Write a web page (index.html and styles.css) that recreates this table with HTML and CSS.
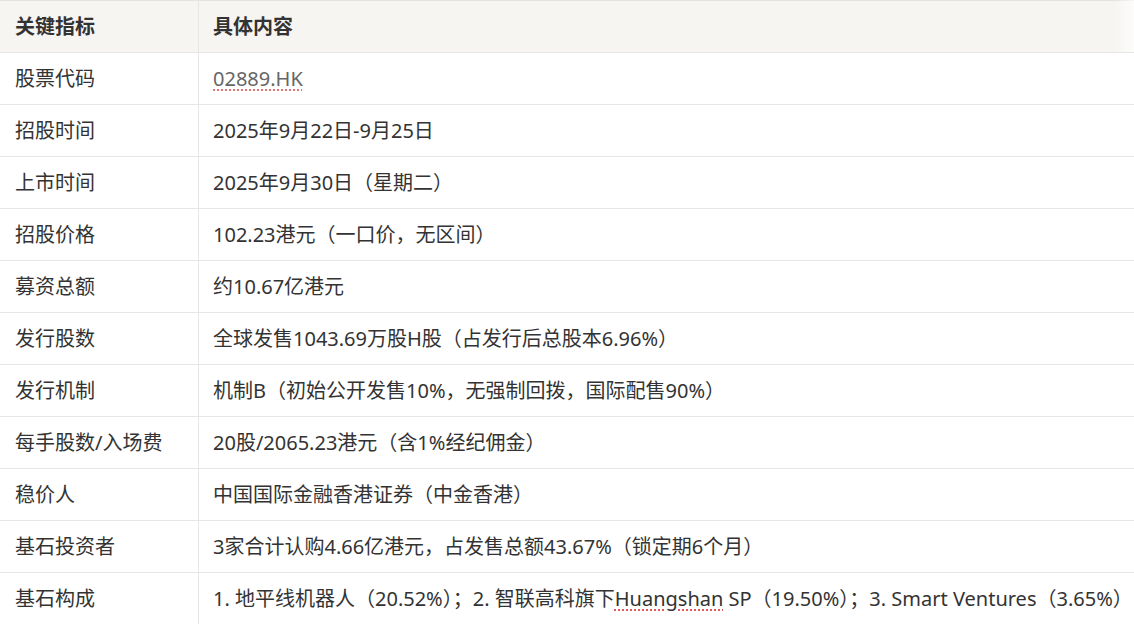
FILE: index.html
```html
<!DOCTYPE html>
<html lang="zh-CN">
<head>
<meta charset="utf-8">
<title>IPO</title>
<link rel="stylesheet" href="styles.css">
</head>
<body>
<div class="wrap">
<table class="ipo">
<thead>
<tr><th class="k">关键指标</th><th class="v">具体内容</th></tr>
</thead>
<tbody>
<tr><td class="k">股票代码</td><td class="v"><span class="code">02889.HK</span></td></tr>
<tr><td class="k">招股时间</td><td class="v">2025年9月22日-9月25日</td></tr>
<tr><td class="k">上市时间</td><td class="v">2025年9月30日（星期二）</td></tr>
<tr><td class="k">招股价格</td><td class="v">102.23港元（一口价，无区间）</td></tr>
<tr><td class="k">募资总额</td><td class="v">约10.67亿港元</td></tr>
<tr><td class="k">发行股数</td><td class="v">全球发售1043.69万股H股（占发行后总股本6.96%）</td></tr>
<tr><td class="k">发行机制</td><td class="v">机制B（初始公开发售10%，无强制回拨，国际配售90%）</td></tr>
<tr><td class="k">每手股数/入场费</td><td class="v">20股/2065.23港元（含1%经纪佣金）</td></tr>
<tr><td class="k">稳价人</td><td class="v">中国国际金融香港证券（中金香港）</td></tr>
<tr><td class="k">基石投资者</td><td class="v">3家合计认购4.66亿港元，占发售总额43.67%（锁定期6个月）</td></tr>
<tr><td class="k">基石构成</td><td class="v">1. 地平线机器人（20.52%）；2. 智联高科旗下<span class="spell">Huangshan</span> SP（19.50%）；3. Smart Ventures（3.65%）</td></tr>
</tbody>
</table>
<div class="fade"></div>
</div>
</body>
</html>
```
FILE: styles.css
```css
html, body {
  margin: 0;
  padding: 0;
  background: #ffffff;
  overflow: hidden;
}
.wrap {
  position: relative;
  width: 1134px;
  height: 624px;
  overflow: hidden;
}
.ipo {
  border-collapse: collapse;
  font-family: "Noto Sans", "Noto Sans CJK SC", sans-serif;
  font-size: 20px;
  color: #333333;
  width: max-content;
  min-width: 1134px;
}
.ipo th, .ipo td {
  height: 51px;
  padding: 0 14px 0 15px;
  border-top: 1px solid #e6e6e6;
  border-bottom: 1px solid #e6e6e6;
  text-align: left;
  vertical-align: middle;
  white-space: nowrap;
  line-height: 26px;
}
.ipo thead th {
  background: #f6f5f2;
  font-weight: bold;
  border-top-color: #e3e3e3;
}
.ipo .k {
  width: 169px;
  min-width: 169px;
  border-right: 1px solid #e6e6e6;
}
.ipo .v {
  padding-left: 14px;
}
.code {
  color: #666666;
  text-decoration: underline dotted #e57373;
  text-underline-offset: 4px;
  text-decoration-thickness: 2px;
}
.spell {
  text-decoration: underline dotted #e05a5a;
  text-underline-offset: 4px;
  text-decoration-thickness: 2px;
}
.fade {
  position: absolute;
  top: 0;
  right: 0;
  width: 20px;
  height: 52px;
  background: linear-gradient(to right, rgba(255,255,255,0), rgba(255,255,255,0.7));
  pointer-events: none;
}
```
